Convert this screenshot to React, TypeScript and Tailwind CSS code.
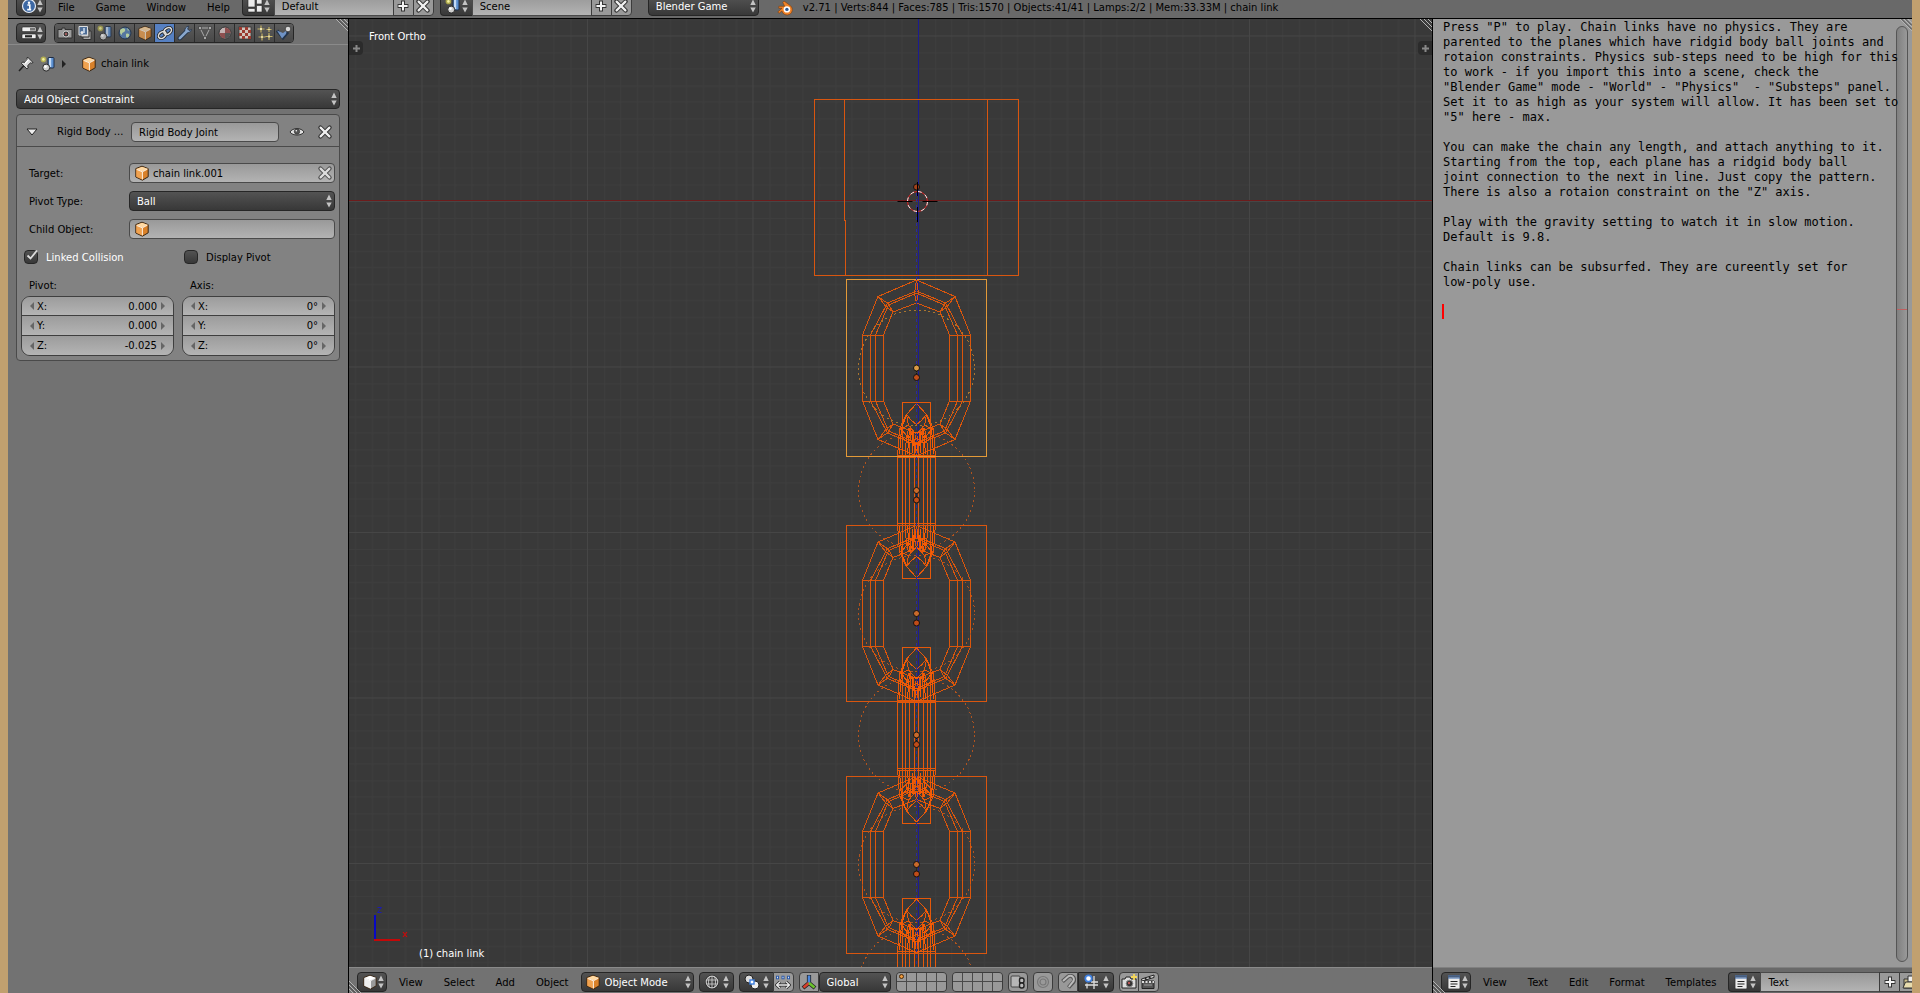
import type { ReactNode } from "react";

const FONT = "font-['DejaVu_Sans',sans-serif] text-[10px] leading-[12px]";
const DARK = "border border-[#262626] bg-linear-to-b from-[#535353] to-[#383838]";
const LIGHT = "border border-[#4a4a4a] bg-linear-to-b from-[#999999] to-[#b3b3b3]";
const TOOL = "border border-[#3c3c3c] bg-[#999999]";

/* ---------- icons ---------- */

function Arrows({ className = "" }: { className?: string }) {
  return (
    <svg className={`h-[14px] w-[6px] shrink-0 ${className}`} viewBox="0 0 6 14" fill="#c4c4c4" aria-hidden="true">
      <path d="M3 .5 5.7 6H.3zM3 13.5 5.7 8.5H.3z" />
    </svg>
  );
}

function Icon({ children, className = "" }: { children: ReactNode; className?: string }) {
  return (
    <svg className={`h-4 w-4 shrink-0 ${className}`} viewBox="0 0 16 16" fill="none" aria-hidden="true">
      {children}
    </svg>
  );
}

function Cube({ white = false, className = "" }: { white?: boolean; className?: string }) {
  return (
    <Icon className={className}>
      <path d="M8 1.2 14.2 3.600v8.200L8.4 15.200 1.800 12V3.600z" fill={white ? "#9a9a9a" : "#d9812a"} stroke="#3a2714" strokeWidth="1" />
      <path d="M2.300 4.2 8.4 6.8v7.8L2.300 11.8z" fill={white ? "#ededed" : "#f0a250"} />
      <path d="M2.400 4 8 1.800l5.700 2-5.300 2.800z" fill={white ? "#ffffff" : "#ffd9a3"} />
      <path d="M8.4 7v7.4M8.4 6.8l-5.8-2.4M8.4 6.8l5-2.6" stroke="#fff" strokeOpacity=".85" strokeWidth="1" />
    </Icon>
  );
}

function SceneIcon({ className = "" }: { className?: string }) {
  return (
    <Icon className={className}>
      <rect x="8" y="1.5" width="6" height="10.5" rx="1" fill="#5b8fd0" stroke="#1f2c44" />
      <rect x="9" y="2" width="2.200" height="9" fill="#c4daf5" />
      <circle cx="6.200" cy="11.6" r="3.5" fill="#d0d0d0" stroke="#2b2b2b" />
      <circle cx="5.4" cy="10.6" r="1.4" fill="#fff" />
      <circle cx="3.4" cy="3.4" r="2.8" fill="#c9c44a" fillOpacity=".75" />
      <circle cx="3.4" cy="3.4" r="1.3" fill="#f5f2a0" />
    </Icon>
  );
}

function InfoIcon() {
  return (
    <Icon>
      <circle cx="8" cy="8" r="6.5" fill="#3c68a4" stroke="#e6ecf5" strokeWidth="1.2" />
      <circle cx="8" cy="4.8" r="1.2" fill="#fff" />
      <path d="M6.4 7h2.4v4.2M6.2 11.6h4" stroke="#fff" strokeWidth="1.6" />
    </Icon>
  );
}

function PlusIcon() {
  return (
    <Icon>
      <path d="M8 2.6v10.8M2.6 8h10.8" stroke="#333" strokeWidth="4" />
      <path d="M8 3.4v9.2M3.4 8h9.2" stroke="#f4f4f4" strokeWidth="2" />
    </Icon>
  );
}

function CrossIcon({ className = "" }: { className?: string }) {
  return (
    <Icon className={className}>
      <path d="m3.4 3.4 9.2 9.2M12.6 3.4l-9.2 9.2" stroke="#333" strokeWidth="4.2" strokeLinecap="round" />
      <path d="m3.6 3.6 8.8 8.8M12.4 3.6l-8.8 8.8" stroke="#f0f0f0" strokeWidth="2.2" strokeLinecap="round" />
    </Icon>
  );
}

function LayoutIcon() {
  return (
    <Icon>
      <path d="M1 1h7v8H1zM9.500 1h5.500v5H9.500zM9.500 7.500h5.500V14H9.500zM1 10.500h7V14H1z" fill="#ececec" stroke="#222" strokeWidth=".6" />
    </Icon>
  );
}

function PropsIcon() {
  return (
    <Icon>
      <rect x="1" y="2" width="14" height="4.6" rx="1" fill="#efefef" stroke="#222" strokeWidth=".6" />
      <rect x="9" y="3" width="5" height="2.6" fill="#777" />
      <rect x="1" y="9" width="14" height="4.6" rx="1" fill="#efefef" stroke="#222" strokeWidth=".6" />
      <rect x="4" y="10.2" width="7" height="2.2" fill="#222" />
    </Icon>
  );
}

function NoteIcon() {
  return (
    <Icon>
      <rect x="2" y="3" width="12" height="12" rx="1" fill="#ececec" stroke="#333" strokeWidth=".8" />
      <path d="M3 1v4M5 1v4M7 1v4M9 1v4M11 1v4M13 1v4" stroke="#4a76b5" strokeWidth="1.1" />
      <path d="M4.5 7.5h7M4.5 10h7M4.5 12.5h5" stroke="#222" strokeWidth="1.2" />
    </Icon>
  );
}

function BlenderLogo() {
  return (
    <Icon>
      <path
        d="M7 1 13.8 6a5.300 5.300 0 1 1-8.900 5L2.2 13.200.8 12 5 8.300H1.800V6.300h5.800L5.800 2.500z"
        fill="#f08228"
        stroke="#7a3d0c"
        strokeWidth=".6"
      />
      <ellipse cx="9.9" cy="9.4" rx="3.3" ry="3.1" fill="#fff" />
      <circle cx="9.9" cy="9.4" r="1.7" fill="#2c5a96" />
    </Icon>
  );
}

const TABS: { name: string; icon: ReactNode }[] = [
  {
    name: "Render",
    icon: (
      <Icon>
        <path d="M1 4.500h4V3h3v1.500h7V13H1z" fill="#9c9c9c" stroke="#333" />
        <circle cx="9" cy="9" r="3" fill="#3a3a3a" stroke="#c8c8c8" />
        <circle cx="9" cy="9" r="1.2" fill="#a05c5c" />
      </Icon>
    ),
  },
  {
    name: "Render Layers",
    icon: (
      <Icon>
        <path d="M6 6h8v8.500H6z" fill="#aaa" stroke="#333" />
        <path d="M4 4h8v8H4z" fill="#c4c4c4" stroke="#333" />
        <path d="M2 1.5h8.5V10H2z" fill="#4d6d96" stroke="#ddd" />
        <circle cx="5" cy="7.6" r="1.5" fill="#e6e6e6" />
        <path d="M7 3v5" stroke="#cfe0f4" strokeWidth="1.5" />
      </Icon>
    ),
  },
  { name: "Scene", icon: <SceneIcon className="opacity-75" /> },
  {
    name: "World",
    icon: (
      <Icon>
        <circle cx="8" cy="8" r="6" fill="#5577a0" stroke="#24344a" />
        <path d="M4 4c3-2 5 0 4 2s-3 1-3 3-2 0-2-2 0-2 1-3zM9 9c2-1 4 0 3 2s-3 2-3 0zM10 3l2 2-1 1z" fill="#b4cc9c" />
      </Icon>
    ),
  },
  { name: "Object", icon: <Cube className="opacity-75" /> },
  {
    name: "Constraints",
    icon: (
      <Icon>
        <g fill="none" strokeLinecap="round">
          <ellipse cx="5.2" cy="10" rx="4.2" ry="2.9" transform="rotate(-38 5.2 10)" stroke="#222" strokeWidth="3.2" />
          <ellipse cx="10.7" cy="6" rx="4.2" ry="2.9" transform="rotate(-38 10.7 6)" stroke="#222" strokeWidth="3.2" />
          <ellipse cx="5.2" cy="10" rx="4.2" ry="2.9" transform="rotate(-38 5.2 10)" stroke="#ddd" strokeWidth="1.6" />
          <ellipse cx="10.7" cy="6" rx="4.2" ry="2.9" transform="rotate(-38 10.7 6)" stroke="#ddd" strokeWidth="1.6" />
        </g>
      </Icon>
    ),
  },
  {
    name: "Modifiers",
    icon: (
      <Icon>
        <path d="M2.8 13.2 10 6" stroke="#24344a" strokeWidth="4.4" strokeLinecap="round" />
        <path d="M11.800 1.200a4 4 0 0 0-3.600 5.600 4 4 0 0 0 6.400-2.400l-2.400 1.200-1.600-1.600z" fill="#88a6cc" stroke="#24344a" strokeWidth=".8" />
        <path d="M2.8 13.2 9.500 6.500" stroke="#88a6cc" strokeWidth="2.6" strokeLinecap="round" />
      </Icon>
    ),
  },
  {
    name: "Data",
    icon: (
      <Icon>
        <path d="M3 3h10L8 13z" stroke="#aaa" strokeWidth="1" />
        <path d="M1.6 1.6h2.8v2.8H1.6zM11.6 1.6h2.8v2.8h-2.8zM6.6 11.6h2.8v2.8H6.6z" fill="#bbb" stroke="#222" strokeWidth=".6" />
      </Icon>
    ),
  },
  {
    name: "Material",
    icon: (
      <Icon>
        <circle cx="8" cy="8" r="6" fill="#c4b4b4" stroke="#333" />
        <path d="M8 2.4V8h5.6A5.6 5.6 0 0 0 8 2.4zM8 8v5.6A5.6 5.6 0 0 1 2.4 8z" fill="#8d4f4f" />
        <path d="M8 8h5.6A5.6 5.6 0 0 1 8 13.6z" fill="#555" />
      </Icon>
    ),
  },
  {
    name: "Texture",
    icon: (
      <Icon>
        <rect x="2" y="2" width="12" height="12" fill="#d0c4bc" stroke="#333" strokeWidth=".8" />
        <path d="M2 2h3v3H2zM8 2h3v3H8zM5 5h3v3H5zM11 5h3v3h-3zM2 8h3v3H2zM8 8h3v3H8zM5 11h3v3H5zM11 11h3v3h-3z" fill="#9b3a30" />
      </Icon>
    ),
  },
  {
    name: "Particles",
    icon: (
      <Icon>
        <path d="M4 .5v7M.5 4h7M12 2v5M9.500 4.500h5M5 8.500v7M1.500 12h7M12 8v7M8.500 11.500h7" stroke="#c2b063" strokeWidth="1.2" />
        <path d="M4 3v2M3 4h2M12 4v1M5 11v2M12 10.500v2" stroke="#f5edbd" strokeWidth="1.400" />
      </Icon>
    ),
  },
  {
    name: "Physics",
    icon: (
      <Icon>
        <path d="M1 5.500 7 13l5-6" stroke="#24344a" strokeWidth="3" />
        <path d="m1 5.500 6 2.500 4-3-1 4-4 4.500z" fill="#6f92c4" />
        <circle cx="12" cy="4" r="2.800" fill="#d8d8d8" stroke="#333" strokeWidth=".8" />
      </Icon>
    ),
  },
];

/* ---------- widgets ---------- */

function EditorButton({ label, className = "", children }: { label: string; className?: string; children: ReactNode }) {
  return (
    <button
      type="button"
      aria-label={label}
      className={`flex h-5 shrink-0 items-center justify-between rounded-[4px] px-1 ${DARK} ${className}`}
    >
      {children}
      <Arrows />
    </button>
  );
}

function Dropdown({
  label,
  value,
  className,
  pad = "pl-[7px]",
  icon,
}: {
  label: string;
  value: string;
  className: string;
  pad?: string;
  icon?: ReactNode;
}) {
  return (
    <div className={`relative h-5 ${className}`}>
      <select
        aria-label={label}
        defaultValue={value}
        className={`block h-5 w-full appearance-none rounded-[4px] pt-[2px] text-white outline-none ${DARK} ${pad}`}
      >
        <option>{value}</option>
      </select>
      {icon && <span className="pointer-events-none absolute top-[2px] left-1">{icon}</span>}
      <Arrows className="pointer-events-none absolute top-[3px] right-[3px]" />
    </div>
  );
}

function Menus({ items }: { items: string[] }) {
  return (
    <nav className="flex shrink-0 items-center gap-[21px] px-3 pt-[2px] text-black">
      {items.map((m) => (
        <button key={m} type="button">
          {m}
        </button>
      ))}
    </nav>
  );
}

function DataBlock({ label, value, icon, last }: { label: string; value: string; icon: ReactNode; last: ReactNode }) {
  return (
    <div className="flex h-5 shrink-0">
      <button
        type="button"
        aria-label={`Browse ${label}`}
        className={`flex w-8 items-center justify-between rounded-l-[4px] border-r-0 px-1 ${DARK}`}
      >
        {icon}
        <Arrows />
      </button>
      <input aria-label={label} defaultValue={value} className={`w-[120px] px-[7px] pt-[2px] text-black outline-none ${LIGHT}`} />
      <button type="button" aria-label={`Add ${label}`} className={`-ml-px flex w-[21px] items-center justify-center ${TOOL}`}>
        <PlusIcon />
      </button>
      <button type="button" aria-label={`${label} action`} className={`-ml-px flex w-[21px] items-center justify-center rounded-r-[4px] ${TOOL}`}>
        {last}
      </button>
    </div>
  );
}

function Corner({ className = "" }: { className?: string }) {
  return (
    <svg className={`pointer-events-none absolute h-3 w-3 ${className}`} viewBox="0 0 12 12" aria-hidden="true">
      <path d="M0 0l12 12M4 0l8 8M8 0l4 4" stroke="#b4b4b4" strokeWidth="1" />
      <path d="M1.500 0 12 10.500M5.500 0 12 6.500" stroke="#444" strokeWidth="1" />
    </svg>
  );
}

/* ---------- properties editor ---------- */

function NumberGroup({ title, rows }: { title: string; rows: [string, string][] }) {
  return (
    <fieldset className="min-w-0 flex-1">
      <legend className="h-[18px] pt-[2px] pl-2">{title}</legend>
      <div className="overflow-hidden rounded-[9px] border border-[#3f3f3f]">
        {rows.map(([axis, value], i) => (
          <label
            key={axis}
            className={`flex items-center bg-linear-to-b from-[#9c9c9c] to-[#b4b4b4] px-2 ${i ? "h-5 border-t border-[#3f3f3f]" : "h-[18px]"}`}
          >
            <svg className="h-2 w-1" viewBox="0 0 4 8" fill="#666" aria-hidden="true">
              <path d="M4 0v8L0 4z" />
            </svg>
            <span className="ml-[3px] pt-px">{axis}:</span>
            <input
              aria-label={`${title} ${axis}`}
              defaultValue={value}
              className="min-w-0 flex-1 bg-transparent pt-px pr-1 text-right outline-none"
            />
            <svg className="h-2 w-1" viewBox="0 0 4 8" fill="#666" aria-hidden="true">
              <path d="M0 0v8l4-4z" />
            </svg>
          </label>
        ))}
      </div>
    </fieldset>
  );
}

function Check({ label, checked = false }: { label: string; checked?: boolean }) {
  return (
    <label className={`relative flex flex-1 items-center gap-2 ${checked ? "text-white" : "text-black"}`}>
      <input type="checkbox" defaultChecked={checked} className={`h-[14px] w-[14px] appearance-none rounded-[4px] ${DARK}`} />
      {checked && (
        <svg className="pointer-events-none absolute -top-px left-[2px] h-3 w-3" viewBox="0 0 12 12" fill="none" aria-hidden="true">
          <path d="m1.500 6.500 3 3L11 1.500" stroke="#ddd" strokeWidth="1.800" />
        </svg>
      )}
      <span className="pt-[2px]">{label}</span>
    </label>
  );
}

function Properties() {
  return (
    <aside className="relative w-[341px] shrink-0 border-r border-black bg-[#727272]">
      <Corner className="top-0 right-0" />
      <header className="flex h-[26px] items-center gap-2 border-b border-[#8a8a8a] pt-[2px] pl-2">
        <EditorButton label="Editor type" className="w-[30px]">
          <PropsIcon />
        </EditorButton>
        <div role="tablist" className="flex h-5 overflow-hidden rounded-[4px] border border-[#262626]">
          {TABS.map((t) => (
            <button
              key={t.name}
              type="button"
              role="tab"
              aria-label={t.name}
              aria-selected={t.name === "Constraints"}
              className={`flex w-5 items-center justify-center border-r border-[#2c2c2c] last:w-[18px] last:border-r-0 ${
                t.name === "Constraints" ? "bg-[#5680c2]" : "bg-linear-to-b from-[#5c5c5c] to-[#484848]"
              }`}
            >
              {t.icon}
            </button>
          ))}
        </div>
      </header>

      <div className="flex h-9 items-center pt-px pl-2">
        <Icon className="ml-[2px]">
          <path d="M1 15 6 9.500" stroke="#222" strokeWidth="1.600" />
          <path d="M9.500 1 15 6.500l-1.500.7-1-.4-2.800 2.800.5 2.400-1.200 1L3.500 7.500 4.500 6l2.500.5L9.700 3.700 9 2.500z" fill="#ddd" stroke="#222" strokeWidth=".9" />
          <path d="M10.500 3.500 7 7.500" stroke="#fff" strokeWidth="1.400" />
        </Icon>
        <SceneIcon className="ml-[6px]" />
        <svg className="ml-[6px] h-2 w-1" viewBox="0 0 4 8" fill="#222" aria-hidden="true">
          <path d="M0 0v8l4-4z" />
        </svg>
        <Cube className="ml-[15px]" />
        <span className="ml-1 pt-px">chain link</span>
      </div>

      <div className="px-2 pt-2">
        <Dropdown label="Add constraint" value="Add Object Constraint" className="w-full" />
        <section className="mt-[5px] rounded-[4px] border border-[#4a4a4a] bg-[#828282]">
          <div className="flex h-8 items-center border-b border-[#4a4a4a] pt-[2px] pr-[6px] pl-[9px]">
            <svg className="h-2 w-3 shrink-0" viewBox="0 0 12 8" aria-hidden="true">
              <path d="M1 1h10L6 7z" fill="#eee" stroke="#222" strokeWidth="1" />
            </svg>
            <span className="ml-[19px] w-[74px] pt-px whitespace-nowrap">Rigid Body ...</span>
            <input
              aria-label="Constraint name"
              defaultValue="Rigid Body Joint"
              className={`h-5 min-w-0 flex-1 rounded-[4px] px-[7px] pt-[2px] outline-none ${LIGHT}`}
            />
            <button type="button" aria-label="Toggle visibility" className="ml-[10px]">
              <Icon>
                <path d="M1 8c2.500-4.500 11.500-4.500 14 0-2.500 4-11.500 4-14 0z" fill="#e2e2e2" stroke="#222" strokeWidth=".9" />
                <circle cx="8" cy="7.600" r="2.700" fill="#555" stroke="#222" strokeWidth=".6" />
                <circle cx="7.300" cy="6.800" r=".8" fill="#fff" />
              </Icon>
            </button>
            <button type="button" aria-label="Remove constraint" className="ml-3">
              <CrossIcon />
            </button>
          </div>

          <div className="px-1 pt-4 pb-1">
            <div className="grid grid-cols-[108px_1fr] items-center gap-y-2">
              <label htmlFor="target" className="pt-[2px] pl-2">
                Target:
              </label>
              <div className={`flex h-5 items-center rounded-[4px] pr-[1px] pl-1 ${LIGHT}`}>
                <Cube />
                <input id="target" defaultValue="chain link.001" className="ml-[3px] min-w-0 flex-1 bg-transparent pt-[2px] outline-none" />
                <button type="button" aria-label="Clear target">
                  <CrossIcon className="opacity-75" />
                </button>
              </div>
              <span className="pt-[2px] pl-2">Pivot Type:</span>
              <Dropdown label="Pivot Type" value="Ball" className="w-full" />
              <label htmlFor="child" className="pt-[2px] pl-2">
                Child Object:
              </label>
              <div className={`flex h-5 items-center rounded-[4px] px-1 ${LIGHT}`}>
                <Cube />
                <input id="child" className="ml-[3px] min-w-0 flex-1 bg-transparent outline-none" />
              </div>
            </div>
            <div className="mt-[11px] flex h-[14px] items-center gap-[9px] pl-[3px]">
              <Check label="Linked Collision" checked />
              <Check label="Display Pivot" />
            </div>
            <div className="mt-[14px] flex gap-2">
              <NumberGroup title="Pivot:" rows={[["X", "0.000"], ["Y", "0.000"], ["Z", "-0.025"]]} />
              <NumberGroup title="Axis:" rows={[["X", "0°"], ["Y", "0°"], ["Z", "0°"]]} />
            </div>
          </div>
        </section>
      </div>
    </aside>
  );
}

/* ---------- 3D viewport ---------- */

const WIRE = "#f85c04";
const CX = 916.5;

function mirrored(points: [number, number][][]) {
  const out: string[] = [];
  for (const line of points)
    for (const sx of [-1, 1])
      for (const sy of [-1, 1]) out.push("M" + line.map(([x, y]) => `${x * sx} ${y * sy}`).join("L"));
  return out.join("");
}

const FRONT_LINK = mirrored([
  [[0, 88], [38.5, 71.5], [54, 33], [54, 0]],
  [[0, 77], [29, 65], [46, 33], [46, 0]],
  [[0, 75], [28, 63], [41, 33], [41, 0]],
  [[0, 65], [23.5, 56], [33, 33], [33, 0]],
  [[33, 33], [54, 33]],
  [[38.5, 71.5], [28, 64], [23.5, 56]],
  [[38.5, 71.5], [31, 62], [23.5, 56]],
  [[0, 88], [2, 75], [0, 65]],
]);

const SIDE_LINK = mirrored([
  [[19, 0], [19, 33], [17, 61], [10, 76], [0, 87]],
  [[14, 0], [14, 88], [0, 88]],
  [[11, 0], [11, 45], [8, 62]],
  [[10, 76], [5, 70], [0, 66]],
  [[10, 76], [12, 72], [14, 68]],
  [[7, 0], [7, 33], [6, 64]],
  [[2, 0], [2, 33], [3, 58]],
  [[19, 33], [0, 33]],
  [[19, 35], [0, 35]],
  [[17, 61], [8, 65], [0, 56]],
  [[8, 65], [10, 76]],
  [[16, 55], [8, 47], [0, 52]],
  [[5, 58], [0, 40], [4, 47]],
]);

const JOINT = mirrored([
  [[17, 36], [15, 62], [10, 76]],
  [[9, 36], [7, 62]],
  [[4, 38], [4, 58], [0, 58]],
  [[4, 45], [0, 47]],
  [[14, 60], [8, 52], [4, 58]],
]);

function Dots({ y, first = "#c96a2b" }: { y: number; first?: string }) {
  return (
    <g stroke="#111" strokeWidth="1">
      <path d={`M${CX} ${y + 3}v5`} strokeDasharray="1 1" />
      <circle cx={CX} cy={y} r="3" fill={first} />
      <circle cx={CX} cy={y + 9.5} r="3" fill="#c04c18" />
    </g>
  );
}

function Ring({ y, color = "#b0531e" }: { y: number; color?: string }) {
  return <circle cx={CX} cy={y} r="58" stroke={color} strokeDasharray="2 3" />;
}

function Scene3D() {
  return (
    <svg className="absolute inset-0 h-full w-full" viewBox="349 19 1083 948" preserveAspectRatio="xMidYMin slice" role="img" aria-label="Wireframe of a chain">
      <defs>
        <pattern id="major" x="918" y="201" width="165.5" height="165.5" patternUnits="userSpaceOnUse">
          <path
            d={Array.from({ length: 9 }, (_, i) => {
              const p = Math.round((i + 1) * 16.55) + 0.5;
              return `M${p} 0v166M0 ${p}h166`;
            }).join("")}
            stroke="#3e3e3e"
          />
          <path d="M.5 0v166M0 .5h166" stroke="#464646" />
        </pattern>
      </defs>
      <rect x="-1000" y="19" width="4000" height="2000" fill="#393939" />
      <rect x="-1000" y="19" width="4000" height="2000" fill="url(#major)" shapeRendering="crispEdges" />
      <g fill="none" strokeWidth="1" shapeRendering="crispEdges">
        <path d="M-1000 200.500h4000" stroke="#6d1c1c" />
        <path d="M918.500 19v950" stroke="#1c1c90" />

        <path d="M814.500 99.500h204v176h-204zM844.500 99.500v121h1v55M987.500 99.500v176" stroke="#d9560f" />

        {[368, 613.5, 864.5].map((y, i) => (
          <g key={y}>
            <path transform={`translate(${CX} ${y})`} d={FRONT_LINK} stroke={WIRE} strokeOpacity=".85" />
            <Ring y={y} color={i ? "#b0531e" : "#a9752f"} />
          </g>
        ))}
        {[490.5, 735, 986].map((y) => (
          <g key={y}>
            <Ring y={y} />
            <path transform={`translate(${CX} ${y})`} d={SIDE_LINK} stroke={WIRE} strokeOpacity=".9" />
            <path transform={`translate(${CX} ${y})`} d={JOINT} stroke={WIRE} />
          </g>
        ))}
        <path d="M846.500 525.500h140v176h-140zM846.500 776.500h140v177h-140z" stroke="#d9560f" />
        <path d="M846.500 279.500h140v177h-140z" stroke="#e39a38" />
        <path d={`M${CX} 187V967`} stroke="#2a2a9c" strokeDasharray="3 3" />
      </g>
      <g fill="none">
        <circle cx={CX} cy="187" r="3" fill="#a3411a" stroke="#111" />
        <circle cx="917.500" cy="201.500" r="10" stroke="#e02020" strokeWidth="1" />
        <circle cx="917.500" cy="201.500" r="10" stroke="#eee" strokeWidth="1" strokeDasharray="4 3.850" />
        <path d="M897.500 201.500h15M922.500 201.500h15M917.500 182v14M917.500 207v15" stroke="#000" />
        <Dots y={368} first="#d99a45" />
        {[490.5, 613.5, 735, 864.5].map((y) => (
          <Dots key={y} y={y} />
        ))}
      </g>
    </svg>
  );
}

function Layers({ active }: { active?: number }) {
  return (
    <div className="grid h-5 shrink-0 grid-cols-5 grid-rows-2 gap-px overflow-hidden rounded-[4px] border border-[#3c3c3c] bg-[#4a4a4a]">
      {Array.from({ length: 10 }, (_, i) => (
        <button key={i} type="button" aria-label={`Layer ${i + 1}`} className="flex w-[9px] items-center justify-center bg-[#999999]">
          {i === active && <span className="h-[5px] w-[5px] rounded-full border border-[#4a2a08] bg-[#f09a3c]" />}
        </button>
      ))}
    </div>
  );
}

function ViewportHeader() {
  return (
    <footer className="relative flex h-[26px] items-center overflow-hidden border-t border-[#8a8a8a] bg-[#727272] pt-[2px] pl-2 whitespace-nowrap">
      <Corner className="bottom-0 left-0 rotate-180" />
      <EditorButton label="Editor type" className="w-[30px]">
        <Cube white />
      </EditorButton>
      <Menus items={["View", "Select", "Add", "Object"]} />
      <div className="flex gap-[5px]">
        <Dropdown label="Mode" value="Object Mode" className="w-[113px]" pad="pl-[23px]" icon={<Cube />} />
        <EditorButton label="Viewport shading" className="w-[35px]">
          <Icon>
            <circle cx="8" cy="8" r="5.800" stroke="#222" strokeWidth="2.400" />
            <circle cx="8" cy="8" r="5.800" stroke="#c8c8c8" strokeWidth="1.200" />
            <path d="M2.500 6h11M2.500 10h11M8 2v12M5.500 2.500c-1.500 4-1.500 7 0 11M10.500 2.500c1.500 4 1.500 7 0 11" stroke="#c8c8c8" strokeWidth=".9" />
          </Icon>
        </EditorButton>
        <div className="flex">
          <EditorButton label="Pivot point" className="w-[35px] rounded-r-none">
            <Icon>
              <circle cx="5" cy="5" r="4" fill="#ddd" stroke="#222" />
              <circle cx="11" cy="11" r="4" fill="#eee" stroke="#222" />
              <rect x="6" y="6" width="4" height="4" fill="#fff" stroke="#3d7fe0" strokeWidth="1.400" />
            </Icon>
          </EditorButton>
          <button type="button" aria-label="Manipulate center points" className={`-ml-px flex w-[21px] items-center justify-center rounded-r-[4px] ${TOOL}`}>
            <Icon>
              <path d="M1 3.500h3M6.500 3.500h3M12 3.500h3" stroke="#2c5aa8" strokeWidth="3.400" />
              <path d="M2 3.500h1M7.500 3.500h1M13 3.500h1" stroke="#e2ecfa" strokeWidth="1.400" />
              <path d="M2 11h12M5 7.800 1.500 11 5 14.200M11 7.800l3.500 3.200-3.500 3.200" stroke="#222" strokeWidth="2.800" />
              <path d="M2 11h12M5 7.800 1.500 11 5 14.200M11 7.800l3.500 3.200-3.500 3.200" stroke="#eee" strokeWidth="1.300" />
            </Icon>
          </button>
        </div>
        <div className="flex">
          <button type="button" aria-label="Manipulator" className={`flex w-5 items-center justify-center rounded-l-[4px] ${TOOL}`}>
            <Icon>
              <path d="M8 1v8M8 9l-6 5M8 9l6 5" stroke="#222" strokeWidth="4.200" />
              <path d="M8 1.500V9" stroke="#4a86dc" strokeWidth="2.600" />
              <path d="m8 9-5.500 4.500" stroke="#d8402c" strokeWidth="2.600" />
              <path d="m8 9 5.500 4.500" stroke="#6bc42c" strokeWidth="2.600" />
            </Icon>
          </button>
          <Dropdown label="Orientation" value="Global" className="w-[72px]" />
        </div>
        <Layers active={0} />
        <Layers />
        <button type="button" aria-label="Lock to scene" className={`flex h-5 w-5 items-center justify-center rounded-[4px] ${TOOL}`}>
          <Icon>
            <rect x="1" y="2" width="9" height="11" rx="1" fill="#b6b6b6" stroke="#444" />
            <rect x="9.500" y="4" width="4.500" height="5" rx="2" fill="#bbb" stroke="#222" strokeWidth="1.400" />
            <rect x="9.500" y="9" width="4.500" height="5" rx="2" fill="#bbb" stroke="#222" strokeWidth="1.400" />
          </Icon>
        </button>
        <button type="button" aria-label="Proportional editing" className={`flex h-5 w-5 items-center justify-center rounded-[4px] ${TOOL}`}>
          <Icon>
            <circle cx="8" cy="8" r="5.500" stroke="#777" strokeWidth="1.200" />
            <circle cx="8" cy="8" r="3" stroke="#777" strokeWidth="1.200" />
          </Icon>
        </button>
        <div className="flex">
          <button type="button" aria-label="Snap" className={`flex h-5 w-5 items-center justify-center rounded-l-[4px] ${TOOL}`}>
            <Icon>
              <path d="m2.500 7.500 5-4.500a3.800 3.800 0 0 1 5.500 5.500L8.500 13.500" stroke="#555" strokeWidth="4" />
              <path d="m3 7 4.800-4.200a3.500 3.500 0 0 1 5 5.200L8.800 13" stroke="#bbb" strokeWidth="2" />
            </Icon>
          </button>
          <EditorButton label="Snap element" className="w-9 rounded-l-none">
            <Icon>
              <path d="M2 11h13M4 14.500v-5M11 2v13M8 8h7" stroke="#ddd" strokeWidth="1.300" />
              <circle cx="5.500" cy="4.500" r="3.200" fill="#fff" stroke="#3d7fe0" strokeWidth="1.800" />
            </Icon>
          </EditorButton>
        </div>
        <div className="flex">
          <button type="button" aria-label="Render image" className={`flex h-5 w-5 items-center justify-center rounded-l-[4px] ${TOOL}`}>
            <Icon>
              <path d="M1 5h3l1-2h4l1 2h5v9H1z" fill="#ddd" stroke="#222" />
              <circle cx="8.500" cy="9.500" r="3.300" fill="#333" stroke="#888" />
              <circle cx="8" cy="9" r="1.200" fill="#b55" />
              <path d="M13 0v6M10 3h6" stroke="#f5d75a" strokeWidth="1.800" />
            </Icon>
          </button>
          <button type="button" aria-label="Render animation" className={`-ml-px flex h-5 w-[21px] items-center justify-center rounded-r-[4px] ${TOOL}`}>
            <Icon>
              <path d="M2 7h12v7.500H2z" fill="#555" stroke="#222" />
              <path d="M1.500 5 14 1v2.500L2 7z" fill="#ddd" stroke="#222" />
              <path d="m5 3.900 1.500 1.800M9 2.700l1.500 1.800" stroke="#222" strokeWidth="1.500" />
              <path d="M2 8h12" stroke="#ddd" strokeWidth="2" strokeDasharray="2 1.500" />
              <path d="M4 11h8" stroke="#999" />
            </Icon>
          </button>
        </div>
      </div>
    </footer>
  );
}

function RegionToggle({ className, label }: { className: string; label: string }) {
  return (
    <button type="button" aria-label={label} className={`absolute top-[22px] flex h-[14px] w-[14px] items-center justify-center bg-[#2b2b2b] ${className}`}>
      <svg className="h-[7px] w-[7px]" viewBox="0 0 7 7" aria-hidden="true">
        <path d="M3.500 0v7M0 3.500h7" stroke="#888" strokeWidth="2" />
      </svg>
    </button>
  );
}

function Viewport() {
  return (
    <main className="flex min-w-0 flex-1 flex-col">
      <div className="relative min-h-0 flex-1 overflow-hidden">
        <Scene3D />
        <Corner className="top-0 right-0" />
        <RegionToggle label="Show tool shelf" className="left-0 rounded-r-[4px]" />
        <RegionToggle label="Show properties" className="right-0 rounded-l-[4px]" />
        <p className="absolute top-[12px] left-5 text-white">Front Ortho</p>
        <svg className="absolute bottom-[20px] left-[24px] h-[42px] w-[36px]" viewBox="0 0 36 42" fill="none" aria-hidden="true">
          <path d="M2 10v26" stroke="#0808c4" strokeWidth="2" />
          <path d="M1 35h26" stroke="#c40808" strokeWidth="2" />
          <path d="M4.500 2.500h4l-4 5h4" stroke="#1c1cb0" />
          <path d="m30 27 4 5M34 27l-4 5" stroke="#d00808" strokeWidth="1.200" />
        </svg>
        <p className="absolute bottom-[7px] left-[70px] text-white">(1) chain link</p>
      </div>
      <ViewportHeader />
    </main>
  );
}

/* ---------- text editor ---------- */

const NOTES = `Press "P" to play. Chain links have no physics. They are
parented to the planes which have ridgid body ball joints and
rotaion constraints. Physics sub-steps need to be high for this
to work - if you import this into a scene, check the
"Blender Game" mode - "World" - "Physics"  - "Substeps" panel.
Set it to as high as your system will allow. It has been set to
"5" here - max.

You can make the chain any length, and attach anything to it.
Starting from the top, each plane has a ridgid body ball
joint connection to the next in line. Just copy the pattern.
There is also a rotaion constraint on the "Z" axis.

Play with the gravity setting to watch it in slow motion.
Default is 9.8.

Chain links can be subsurfed. They are cureently set for
low-poly use.
`;

function TextEditor() {
  return (
    <section className="flex w-[480px] shrink-0 flex-col border-l border-black">
      <div className="relative flex min-h-0 flex-1 bg-[#999999]">
        <textarea
          aria-label="Text"
          defaultValue={NOTES}
          spellCheck={false}
          wrap="off"
          className="relative z-10 -mr-2 block h-full min-w-0 flex-1 resize-none overflow-hidden bg-transparent pt-px pl-[10px] font-['DejaVu_Sans_Mono',monospace] text-[12px] leading-[15px] text-black outline-none"
        />
        <span className="absolute top-[285px] left-[9px] h-[15px] w-[2px] bg-[#ff0000]" />
        <div className="relative mt-[7px] mr-1 mb-[5px] w-3 shrink-0 rounded-full border border-[#555555] bg-linear-to-r from-[#808080] to-[#999999]">
          <span className="absolute top-[282px] left-0 h-px w-full bg-[#c06060]" />
        </div>
        <Corner className="top-0 right-0" />
      </div>
      <footer className="relative flex h-[26px] shrink-0 items-center overflow-hidden border-t border-[#808080] bg-[#696969] pt-[2px] pl-2 whitespace-nowrap">
        <Corner className="bottom-0 left-0 rotate-180" />
        <EditorButton label="Editor type" className="w-[30px]">
          <NoteIcon />
        </EditorButton>
        <Menus items={["View", "Text", "Edit", "Format", "Templates"]} />
        <DataBlock
          label="Text block"
          value="Text"
          icon={<NoteIcon />}
          last={
            <Icon>
              <path d="M2 5h5l1 1.500h6V14H2z" fill="#cfc08a" stroke="#333" />
              <path d="M6 2h8v6H6z" fill="#eee" stroke="#333" />
              <path d="m1 14 2.500-6H15l-2 6z" fill="#e8dcae" stroke="#333" />
            </Icon>
          }
        />
      </footer>
    </section>
  );
}

export default function App() {
  return (
    <div className={`flex h-screen flex-col overflow-hidden border-x-8 border-[#c1a06f] bg-[#727272] text-black ${FONT}`}>
      <header className="relative flex h-[19px] shrink-0 items-end overflow-hidden border-b border-black bg-[#696969] pb-[2px] pl-2 whitespace-nowrap">
        <EditorButton label="Editor type" className="w-[30px]">
          <InfoIcon />
        </EditorButton>
        <div className="pb-[2px]">
          <Menus items={["File", "Game", "Window", "Help"]} />
        </div>
        <DataBlock label="Screen" value="Default" icon={<LayoutIcon />} last={<CrossIcon />} />
        <div className="ml-[6px] flex">
          <DataBlock label="Scene" value="Scene" icon={<SceneIcon />} last={<CrossIcon />} />
        </div>
        <Dropdown label="Render engine" value="Blender Game" className="ml-4 w-[111px]" />
        <div className="ml-[18px] flex items-end gap-[10px]">
          <BlenderLogo />
          <span className="pb-[2px]">v2.71 | Verts:844 | Faces:785 | Tris:1570 | Objects:41/41 | Lamps:2/2 | Mem:33.33M | chain link</span>
        </div>
      </header>
      <div className="flex min-h-0 flex-1">
        <Properties />
        <Viewport />
        <TextEditor />
      </div>
    </div>
  );
}
